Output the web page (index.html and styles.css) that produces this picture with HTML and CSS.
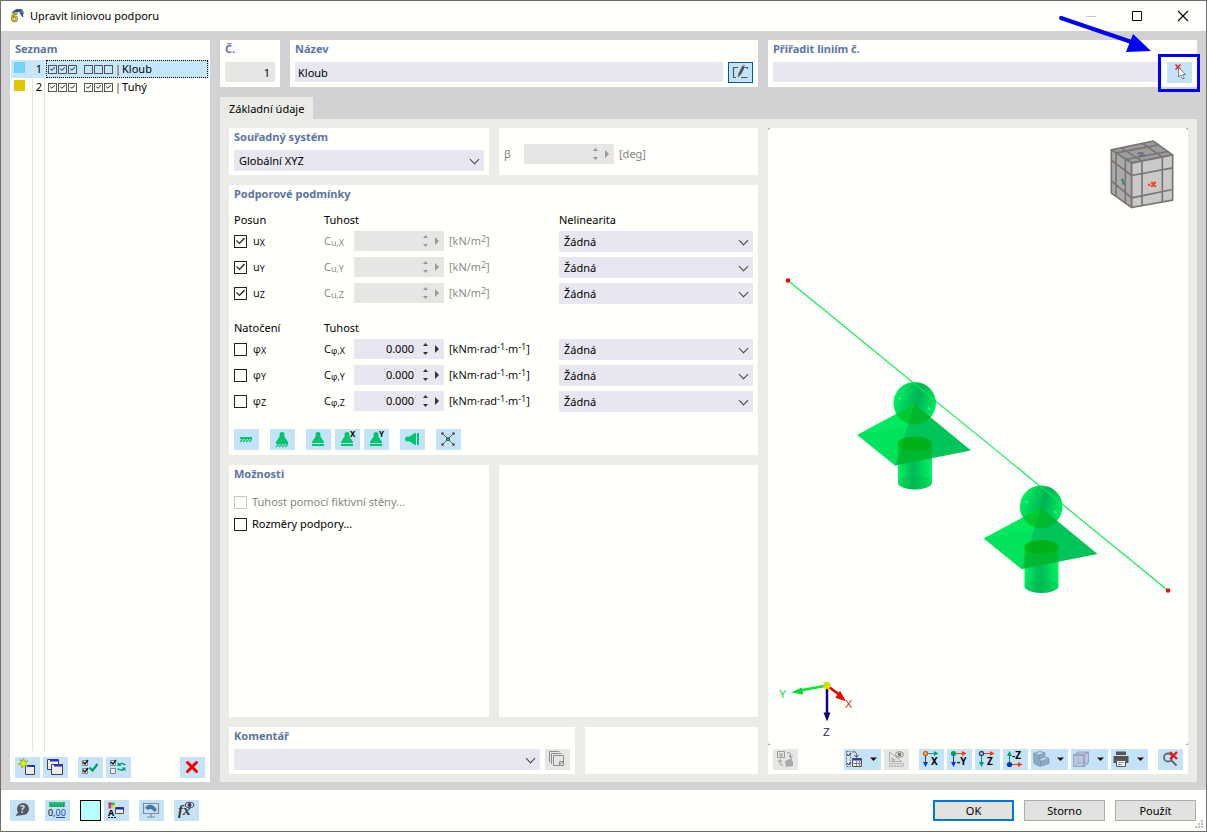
FILE: index.html
```html
<!DOCTYPE html>
<html lang="cs">
<head>
    <meta charset="UTF-8">
    <meta name="viewport" content="width=device-width, initial-scale=1">
    <title>Upravit liniovou podporu</title>
    <link rel="stylesheet" href="styles.css">
</head>
<body>
    <header class="titlebar">
        <svg class="app-icon" viewBox="0 0 16 16">
            <path d="M2 5 L7 1 L13 1 L15 5 L13 9 L10 4 Z" fill="#54719f"/>
            <path d="M4 4 L9 2 M8 4 L12 2 M12 5 L14 9" stroke="#26395e" fill="none"/>
            <text x="2" y="14" font-size="12" font-weight="bold" fill="#f0cc14" stroke="#5d5414" stroke-width=".5">6</text>
        </svg>
        <h1>Upravit liniovou podporu</h1>
        <div class="win-buttons">
            <button type="button" aria-label="Minimalizovat" disabled><svg viewBox="0 0 12 12"><path d="M1 6.500H11" stroke="#c9c9c6"/></svg></button>
            <button type="button" aria-label="Maximalizovat"><svg viewBox="0 0 12 12"><path d="M1.500 1.500H10.500V10.500H1.500Z" fill="none" stroke="#000"/></svg></button>
            <button type="button" aria-label="Zavřít"><svg viewBox="0 0 12 12"><path d="M1 1L11 11M11 1L1 11" stroke="#000" stroke-width="1.100"/></svg></button>
        </div>
    </header>

    <main class="workspace">
        <aside class="panel list-panel">
            <h2>Seznam</h2>
            <ul class="support-list">
                <li class="selected">
                    <span class="swatch blue"></span><span class="num">1</span>
                    <span class="entry">
                        <input class="mini" type="checkbox" aria-label="uX" checked><input class="mini" type="checkbox" aria-label="uY" checked><input class="mini" type="checkbox" aria-label="uZ" checked>
                        <input class="mini second" type="checkbox" aria-label="φX"><input class="mini" type="checkbox" aria-label="φY"><input class="mini" type="checkbox" aria-label="φZ">
                        <span class="bar">|</span>Kloub
                    </span>
                </li>
                <li>
                    <span class="swatch yellow"></span><span class="num">2</span>
                    <span class="entry">
                        <input class="mini" type="checkbox" aria-label="uX" checked><input class="mini" type="checkbox" aria-label="uY" checked><input class="mini" type="checkbox" aria-label="uZ" checked>
                        <input class="mini second" type="checkbox" aria-label="φX" checked><input class="mini" type="checkbox" aria-label="φY" checked><input class="mini" type="checkbox" aria-label="φZ" checked>
                        <span class="bar">|</span>Tuhý
                    </span>
                </li>
                <li class="rest"><span></span><span class="num"></span><span></span></li>
            </ul>
            <div class="toolbar list-tools">
                <button class="tool" type="button" aria-label="Nový">
                    <svg viewBox="0 0 25 21"><path d="M10.500 8.500H19.500V17.500H10.500Z" fill="#eee" stroke="#444"/><path d="M12 9H20" stroke="#2b2bd0" stroke-width="2"/><path d="M8.500 1L9.500 4.500L13 4L10.500 6.500L12.500 9.500L9 8.500L7 11L6.500 8L3.500 7L6.500 5.500L5 2.500L7.500 4Z" fill="#e3f500" stroke="#7d9a1c" stroke-width=".7"/></svg>
                </button>
                <button class="tool" type="button" aria-label="Kopírovat">
                    <svg viewBox="0 0 25 21"><path d="M4.500 2.500H15.500V12.500H4.500Z" fill="#eee" stroke="#444"/><path d="M7 3.500H15" stroke="#2b2bd0" stroke-width="2"/><path d="M8.500 7.500H19.500V17.500H8.500Z" fill="#eee" stroke="#444"/><path d="M11 8.500H19" stroke="#2b2bd0" stroke-width="2"/></svg>
                </button>
                <button class="tool gap" type="button" aria-label="Vybrat vše">
                    <svg viewBox="0 0 25 21"><path d="M4.500 3.500H9.500V8.500H4.500ZM4.500 11.500H9.500V16.500H4.500Z" fill="#e8eef2" stroke="#7b868e"/><path d="M5 5L7 7L10 3M5 13L7 15L10 11" fill="none" stroke="#111" stroke-width="1.300"/><path d="M11.500 10.500L14.500 13.500L19.500 7" fill="none" stroke="#00a068" stroke-width="2.200"/></svg>
                </button>
                <button class="tool" type="button" aria-label="Obrátit výběr">
                    <svg viewBox="0 0 25 21"><path d="M4.500 3.500H9.500V8.500H4.500ZM4.500 11.500H9.500V16.500H4.500Z" fill="#e8eef2" stroke="#7b868e"/><path d="M5 5L7 7L10 3" fill="none" stroke="#111" stroke-width="1.300"/><path d="M19.500 8C17 6 15 6 13 7.500M11.500 11.500C14 13.500 16 13.500 18 12" fill="none" stroke="#00a068" stroke-width="1.600"/><path d="M11.500 5V9H15.500ZM19.500 14.500V10.500H15.500Z" fill="#00a068"/></svg>
                </button>
                <button class="tool push" type="button" aria-label="Smazat">
                    <svg viewBox="0 0 25 21"><path d="M7.500 5.500L16.500 14.500M16.500 5.500L7.500 14.500" stroke="#f60000" stroke-width="3" stroke-linecap="round"/></svg>
                </button>
            </div>
        </aside>

        <div class="content">
            <div class="top-row">
                <section class="panel no-panel">
                    <h2><label for="no">Č.</label></h2>
                    <input id="no" class="field" type="text" value="1" readonly>
                </section>
                <section class="panel name-panel">
                    <h2><label for="name">Název</label></h2>
                    <div class="field-row">
                        <input id="name" class="field" type="text" value="Kloub">
                        <button class="tool outlined" type="button" aria-label="Upravit název">
                            <svg viewBox="0 0 25 21"><path d="M10 5.500H5.500V15.500H8M13 15.500H19.500M17 5.500H19.500V7" fill="none" stroke="#505960" stroke-width="1.200"/><path d="M10 15L11 11L14.500 4L16.500 5L13 12ZM15 3L17 4" fill="#505050" stroke="#505050" stroke-width=".6"/></svg>
                        </button>
                    </div>
                </section>
                <section class="panel assign-panel">
                    <h2><label for="assign">Přiřadit liniím č.</label></h2>
                    <div class="field-row">
                        <input id="assign" class="field" type="text">
                        <div class="pick">
                            <button class="tool" type="button" aria-label="Vybrat linie">
                                <svg viewBox="0 0 25 21"><path d="M8.500 2.500L13.500 7.500M13.500 2.500L8.500 7.500" stroke="#f01818" stroke-width="1.500"/><path d="M11.500 5.500V15L13.700 13L15.500 17L17.300 16.200L15.600 12.500H18.500Z" fill="#fff" stroke="#6c737a" stroke-width=".9"/></svg>
                            </button>
                            <svg class="pointer" viewBox="0 0 142 78"><path d="M3 4L72 27.500" stroke="#0000fe" stroke-width="4" stroke-linecap="round"/><path d="M75 20L93 37L68 38Z" fill="#0000fe"/><rect x="101.500" y="41.500" width="39" height="35" fill="none" stroke="#0000fe" stroke-width="3"/></svg>
                        </div>
                    </div>
                </section>
            </div>

            <nav class="tabs"><button class="tab" type="button">Základní údaje</button></nav>

            <div class="tab-page">
                <div class="settings">
                    <div class="split">
                        <section class="panel half">
                            <h2><label for="cs">Souřadný systém</label></h2>
                            <div class="select"><select id="cs"><option>Globální XYZ</option></select></div>
                        </section>
                        <section class="panel fill">
                            <div class="beta-row">
                                <label for="beta">β</label>
                                <div class="spin disabled"><input id="beta" type="text" disabled><svg viewBox="0 0 22 20"><path d="M1 7L3.500 4L6 7ZM1 13L3.500 16L6 13ZM13 6L17 10L13 14Z"/></svg></div>
                                <span>[deg]</span>
                            </div>
                        </section>
                    </div>

                    <section class="panel conditions">
                        <h2>Podporové podmínky</h2>
                        <div class="cond-grid">
                            <span class="head">Posun</span><span class="head wide">Tuhost</span><span class="head">Nelinearita</span>

                            <label class="check"><input type="checkbox" checked><span>u<small>X</small></span></label>
                            <label class="coef off" for="cux">C<small>u,X</small></label>
                            <div class="spin disabled"><input id="cux" type="text" disabled><svg viewBox="0 0 22 20"><path d="M1 7L3.500 4L6 7ZM1 13L3.500 16L6 13ZM13 6L17 10L13 14Z"/></svg></div>
                            <span class="unit off">[kN/m<sup>2</sup>]</span>
                            <div class="select"><select aria-label="Nelinearita uX"><option>Žádná</option></select></div>

                            <label class="check"><input type="checkbox" checked><span>u<small>Y</small></span></label>
                            <label class="coef off" for="cuy">C<small>u,Y</small></label>
                            <div class="spin disabled"><input id="cuy" type="text" disabled><svg viewBox="0 0 22 20"><path d="M1 7L3.500 4L6 7ZM1 13L3.500 16L6 13ZM13 6L17 10L13 14Z"/></svg></div>
                            <span class="unit off">[kN/m<sup>2</sup>]</span>
                            <div class="select"><select aria-label="Nelinearita uY"><option>Žádná</option></select></div>

                            <label class="check"><input type="checkbox" checked><span>u<small>Z</small></span></label>
                            <label class="coef off" for="cuz">C<small>u,Z</small></label>
                            <div class="spin disabled"><input id="cuz" type="text" disabled><svg viewBox="0 0 22 20"><path d="M1 7L3.500 4L6 7ZM1 13L3.500 16L6 13ZM13 6L17 10L13 14Z"/></svg></div>
                            <span class="unit off">[kN/m<sup>2</sup>]</span>
                            <div class="select"><select aria-label="Nelinearita uZ"><option>Žádná</option></select></div>
                        </div>
                        <div class="cond-grid">
                            <span class="head">Natočení</span><span class="head wide">Tuhost</span><span class="head"></span>

                            <label class="check"><input type="checkbox"><span>φ<small>X</small></span></label>
                            <label class="coef" for="cfx">C<small>φ,X</small></label>
                            <div class="spin"><input id="cfx" type="text" value="0.000"><svg viewBox="0 0 22 20"><path d="M1 7L3.500 4L6 7ZM1 13L3.500 16L6 13ZM13 6L17 10L13 14Z"/></svg></div>
                            <span class="unit">[kNm·rad<sup>-1</sup>·m<sup>-1</sup>]</span>
                            <div class="select"><select aria-label="Nelinearita φX"><option>Žádná</option></select></div>

                            <label class="check"><input type="checkbox"><span>φ<small>Y</small></span></label>
                            <label class="coef" for="cfy">C<small>φ,Y</small></label>
                            <div class="spin"><input id="cfy" type="text" value="0.000"><svg viewBox="0 0 22 20"><path d="M1 7L3.500 4L6 7ZM1 13L3.500 16L6 13ZM13 6L17 10L13 14Z"/></svg></div>
                            <span class="unit">[kNm·rad<sup>-1</sup>·m<sup>-1</sup>]</span>
                            <div class="select"><select aria-label="Nelinearita φY"><option>Žádná</option></select></div>

                            <label class="check"><input type="checkbox"><span>φ<small>Z</small></span></label>
                            <label class="coef" for="cfz">C<small>φ,Z</small></label>
                            <div class="spin"><input id="cfz" type="text" value="0.000"><svg viewBox="0 0 22 20"><path d="M1 7L3.500 4L6 7ZM1 13L3.500 16L6 13ZM13 6L17 10L13 14Z"/></svg></div>
                            <span class="unit">[kNm·rad<sup>-1</sup>·m<sup>-1</sup>]</span>
                            <div class="select"><select aria-label="Nelinearita φZ"><option>Žádná</option></select></div>
                        </div>
                        <div class="toolbar presets">
                            <button class="tool" type="button" aria-label="Vetknutí"><svg viewBox="0 0 25 21"><path d="M6 8H18V10H6Z" fill="#00c56d"/><path d="M6 13L9 10M9 13L12 10M12 13L15 10M15 13L18 10" stroke="#00c56d" stroke-width="1.300"/></svg></button>
                            <button class="tool wide-gap" type="button" aria-label="Kloub"><svg viewBox="0 0 25 21"><circle cx="12" cy="5.500" r="2.500" fill="#00c56d"/><path d="M10.500 6H13.500L18 13V15H6V13Z" fill="#00c56d"/><path d="M6 18L9 15M9 18L12 15M12 18L15 15M15 18L18 15" stroke="#00c56d" stroke-width="1.300"/></svg></button>
                            <button class="tool wide-gap" type="button" aria-label="Posuvná"><svg viewBox="0 0 25 21"><circle cx="12" cy="5.500" r="2.500" fill="#00c56d"/><path d="M10.500 6H13.500L18 13V14H6V13ZM6 15H18V17H6Z" fill="#00c56d"/></svg></button>
                            <button class="tool" type="button" aria-label="Posuvná X"><svg viewBox="0 0 25 21"><circle cx="12" cy="5.500" r="2.500" fill="#00c56d"/><path d="M10.500 6H13.500L18 13V14H6V13ZM6 15H18V17H6Z" fill="#00c56d"/><text x="15" y="8" font-size="8" font-weight="bold">X</text></svg></button>
                            <button class="tool" type="button" aria-label="Posuvná Y"><svg viewBox="0 0 25 21"><circle cx="12" cy="5.500" r="2.500" fill="#00c56d"/><path d="M10.500 6H13.500L18 13V14H6V13ZM6 15H18V17H6Z" fill="#00c56d"/><text x="15" y="8" font-size="8" font-weight="bold">Y</text></svg></button>
                            <button class="tool wide-gap" type="button" aria-label="Boční"><svg viewBox="0 0 25 21"><circle cx="7.500" cy="10" r="2.500" fill="#00c56d"/><path d="M8 8.500V11.500L15 16H16V4H15ZM17 4H19V16H17Z" fill="#00c56d"/></svg></button>
                            <button class="tool wide-gap" type="button" aria-label="Volná"><svg viewBox="0 0 25 21"><path d="M6.500 4.500L17.500 15.500M17.500 4.500L6.500 15.500" stroke="#555" stroke-width="1"/><g fill="#666"><circle cx="6.500" cy="4.500" r="1.500"/><circle cx="17.500" cy="4.500" r="1.500"/><circle cx="6.500" cy="15.500" r="1.500"/><circle cx="17.500" cy="15.500" r="1.500"/></g><path d="M10.500 8.500H13.500V11.500H10.500Z" fill="#19b34b" stroke="#49604e"/></svg></button>
                        </div>
                    </section>

                    <div class="split grow">
                        <section class="panel half options">
                            <h2>Možnosti</h2>
                            <label class="check off"><input type="checkbox" disabled><span>Tuhost pomocí fiktivní stěny...</span></label>
                            <label class="check"><input type="checkbox"><span>Rozměry podpory...</span></label>
                        </section>
                        <section class="panel fill"></section>
                    </div>

                    <div class="split">
                        <section class="panel comment">
                            <h2><label for="comment">Komentář</label></h2>
                            <div class="field-row">
                                <div class="select"><select id="comment"><option></option></select></div>
                                <button class="tool" type="button" aria-label="Uložené komentáře" disabled><svg viewBox="0 0 25 21"><path d="M4.500 13V2.500H14.500M6.500 15V4.500H16.500M8.500 6.500H18.500V16.500H8.500ZM14.500 16V12.500H18" fill="none" stroke="#8d8d8d"/><path d="M15 15L18 13" stroke="#8d8d8d"/></svg></button>
                            </div>
                        </section>
                        <section class="panel fill"></section>
                    </div>
                </div>

                <section class="panel viewer">
                    <!-- model preview -->
                    <svg class="scene" viewBox="768 128 420 616">
                        <defs>
                            <linearGradient id="ball" x1="0" y1="0.3" x2="1" y2="0.6"><stop offset="0" stop-color="#00f562"/><stop offset=".55" stop-color="#00b453"/><stop offset="1" stop-color="#00ec61"/></linearGradient>
                            <linearGradient id="tube"><stop offset="0" stop-color="#00f562"/><stop offset=".45" stop-color="#00b858"/><stop offset=".6" stop-color="#00ca58"/><stop offset="1" stop-color="#00f562"/></linearGradient>
                            <clipPath id="plate"><path d="M914.700 403.700L857.300 434.500L895 465L971 450Z"/></clipPath>
                            <g id="support">
                                <path d="M898 443V482A17 7 0 0 0 932 482V443Z" fill="url(#tube)"/>
                                <ellipse cx="915" cy="482" rx="17" ry="7" fill="#00b44c" opacity=".3"/>
                                <circle cx="914.700" cy="402.700" r="21.300" fill="url(#ball)"/>
                                <path d="M914.700 403.700L857.300 434.500L895 465L900 464Z" fill="#00e35b"/>
                                <path d="M914.700 403.700L857.300 434.500L909 425Z" fill="#00ea5d"/>
                                <path d="M914.700 403.700L971 450L895 465Z" fill="#00c65a"/>
                                <g clip-path="url(#plate)" fill="#00a800">
                                    <circle cx="914.700" cy="402.700" r="21.300" opacity=".5"/>
                                    <path d="M898 443A17 7 0 0 1 932 443V490H898Z" opacity=".45"/>
                                    <ellipse cx="915" cy="443" rx="17" ry="7" opacity=".45"/>
                                </g>
                                <circle cx="900" cy="398" r="1.200" fill="#19ff8a"/><circle cx="929" cy="408" r="1.500" fill="#19ff72"/>
                            </g>
                        </defs>
                        <use href="#support"/>
                        <use href="#support" transform="translate(126.500 103.500)"/>
                        <path d="M788 280L1168 590" stroke="#00ee50" stroke-width="1.100"/>
                        <circle cx="788" cy="280" r="2.200" fill="#f60000"/><circle cx="1168" cy="590" r="2.200" fill="#f60000"/>
                        <path d="M768 130V128H770M1186 128H1188V130M768 742V744H770M1186 744H1188V742" fill="none" stroke="#aaa"/>

                        <!-- view cube -->
                        <g transform="translate(1090 120) scale(.3333)" stroke="#7b7474" stroke-width="5" stroke-linejoin="round">
                            <path d="M64 88L190 62L248 103L125 128Z" fill="#9d9d9d"/>
                            <path d="M64 88L125 128V261L64 218Z" fill="#aaa"/>
                            <path d="M125 128L248 103V239L125 261Z" fill="#c9c9c8"/>
                            <path d="M94 82L156 122V256M158 69L217 110V244M78 97L206 73M106 117L235 93M78 97V228M106 117V248M64 119L125 165L248 142M64 181L125 232L248 207" fill="none"/>
                            <path d="M142 99L160 97M147 107L165 103" stroke="#656586" stroke-width="5"/>
                            <path d="M95 175L100 184L101 193" fill="none" stroke="#42896a" stroke-width="7"/>
                            <path d="M174 193H181M184 184L197 199M197 184L184 199" stroke="#fa3a20" stroke-width="6"/>
                        </g>

                        <!-- axes -->
                        <path d="M827 685L800 690" stroke="#00e83a" stroke-width="2.500"/><path d="M791 692L802 687L803 694Z" fill="#00d83b"/>
                        <path d="M827 685L839 694" stroke="#e80000" stroke-width="2.500"/><path d="M845 700L836 697L840 691Z" fill="#f60000" stroke="#f60000"/>
                        <path d="M827 685V713" stroke="#1b0080" stroke-width="2.500"/><path d="M823.500 712H830.500L827 721Z" fill="#1b0070"/>
                        <circle cx="827" cy="685" r="3.700" fill="#d4db00"/>
                        <g class="axis-names"><text x="779" y="697" fill="#00d84a">Y</text><text x="845" y="707" fill="#f02020">X</text><text x="823" y="735" fill="#2c1e80">Z</text></g>
                    </svg>
                    <div class="toolbar view-tools">
                        <button class="tool" type="button" aria-label="Obnovit" disabled><svg viewBox="0 0 25 21"><path d="M4.500 2.500H11.500V8.500H4.500ZM7 4V7H9V4" fill="none" stroke="#999"/><path d="M14 4C17 3 18 4 17.500 8M16 6L17.500 9L19.500 6.500M7 11V14C7 16 8 16 10 16M5 13L7 10.500L9 13" fill="none" stroke="#999"/><path d="M12 12L19 9V12H20V17L13 18Z" fill="#aaa"/></svg></button>
                        <button class="tool drop push" type="button" aria-label="Seznam zobrazení"><svg viewBox="0 0 37 21"><path d="M2.500 2.500H6.500V17.500H2.500Z" fill="#dde7ef" stroke="#6b7780" stroke-dasharray="2 1"/><path d="M3 5L4.500 7L6.500 4M3 14L4.500 16L6.500 13" fill="none" stroke="#222"/><path d="M8 3C12 2 13 4 12.500 8M10.500 6L12.500 8.500L14.500 6" fill="none" stroke="#555"/><path d="M8.500 9.500H17.500V17.500H8.500Z" fill="#eee" stroke="#555"/><path d="M9 10.500H17.500" stroke="#2737ca" stroke-width="2"/><path d="M9 14.500H17M12.500 12V17M15.500 12V17" stroke="#888"/><path d="M26 8.500H33L29.500 12Z" fill="#111"/></svg></button>
                        <button class="tool" type="button" aria-label="Kóty" disabled><svg viewBox="0 0 25 21"><path d="M5.500 3V12.500H17.500ZM8 9V11H11Z" fill="none" stroke="#aaa"/><path d="M5.500 14.500H19.500V17.500H5.500ZM8 15V17M11 15V17M14 15V17M17 15V17" fill="none" stroke="#bbb"/><ellipse cx="15.500" cy="5.500" rx="4" ry="2.800" fill="none" stroke="#888"/><circle cx="15.500" cy="5.500" r="1.800" fill="#777"/></svg></button>
                        <button class="tool gap" type="button" aria-label="Pohled X"><svg viewBox="0 0 25 21"><path d="M7 4.500H16" stroke="#00a26a"/><path d="M15 2L19.500 4.500L15 7Z" fill="#00a26a"/><path d="M6.500 5V14" stroke="#003bd8"/><path d="M4 13H9L6.500 18Z" fill="#003bd8"/><circle cx="6.500" cy="4.500" r="2" fill="#f8d434" stroke="#f05114" stroke-width="1.300"/><text x="12" y="16" font-size="10" font-weight="bold">X</text></svg></button>
                        <button class="tool" type="button" aria-label="Pohled -Y"><svg viewBox="0 0 25 21"><path d="M7 4.500H16" stroke="#ff3900"/><path d="M15 2L19.500 4.500L15 7Z" fill="#ff3900"/><path d="M6.500 5V14" stroke="#003bd8"/><path d="M4 13H9L6.500 18Z" fill="#003bd8"/><circle cx="6.500" cy="4.500" r="2.600" fill="#009b68"/><text x="10" y="16" font-size="10" font-weight="bold">-Y</text></svg></button>
                        <button class="tool" type="button" aria-label="Pohled Z"><svg viewBox="0 0 25 21"><path d="M7 4.500H16" stroke="#ff3900"/><path d="M15 2L19.500 4.500L15 7Z" fill="#ff3900"/><path d="M6.500 5V14" stroke="#00a26a"/><path d="M4 13H9L6.500 18Z" fill="#00a26a"/><circle cx="6.500" cy="4.500" r="2" fill="#f8e434" stroke="#1439c8" stroke-width="1.300"/><text x="12" y="16" font-size="10" font-weight="bold">Z</text></svg></button>
                        <button class="tool" type="button" aria-label="Pohled -Z"><svg viewBox="0 0 25 21"><path d="M7 15.500H16" stroke="#ff3900"/><path d="M15 13L19.500 15.500L15 18Z" fill="#ff3900"/><path d="M6.500 15V6" stroke="#00a26a"/><path d="M4 7H9L6.500 2Z" fill="#00a26a"/><circle cx="6.500" cy="15.500" r="2.600" fill="#0032c0"/><text x="9" y="10" font-size="10" font-weight="bold">-Z</text></svg></button>
                        <button class="tool drop" type="button" aria-label="Zobrazení ploch"><svg viewBox="0 0 37 21"><path d="M2.500 4.500L9 2.500L14 4V8L18 9.500V14.500L9 17.500L3 14.500Z" fill="#8ba8c6" stroke="#7790aa" stroke-width=".7"/><path d="M2.500 4.500L9 2.500L14 4L8 6ZM8 11L13 8L18 9.500L10 12Z" fill="#c3d7e9" stroke="#7c95af" stroke-width=".7"/><path d="M8 6V11L9.500 12V17" fill="none" stroke="#7c95af"/><path d="M26 8.500H33L29.500 12Z" fill="#111"/></svg></button>
                        <button class="tool drop" type="button" aria-label="Drátěný model"><svg viewBox="0 0 37 21"><path d="M2.500 6L7 3H17.500L13 6ZM2.500 6H13V17.500H2.500ZM13 6L17.500 3V14L13 17.500Z" fill="#bbc6df" stroke="#8e96b2" stroke-width=".8"/><path d="M7 3V14H17M7 14L3 17" fill="none" stroke="#a2abc4" stroke-width=".7"/><path d="M26 8.500H33L29.500 12Z" fill="#111"/></svg></button>
                        <button class="tool drop" type="button" aria-label="Tisk"><svg viewBox="0 0 37 21"><path d="M5 2.500H15V6H5ZM2.500 7H17.500V14H15V11H5V14H2.500Z" fill="#555"/><path d="M5.500 11.500H14.500V17.500H5.500Z" fill="#fff" stroke="#555"/><path d="M7 13.500H13M7 15.500H11" stroke="#888"/><path d="M26 8.500H33L29.500 12Z" fill="#111"/></svg></button>
                        <button class="tool gap" type="button" aria-label="Zrušit lupu"><svg viewBox="0 0 25 21"><circle cx="10" cy="8.500" r="4" fill="none" stroke="#65686a" stroke-width="1.800"/><path d="M13 11L18.500 16.500" stroke="#65686a" stroke-width="2"/><path d="M12 3L19 10M19 3L12 10" stroke="#f01212" stroke-width="2.400"/></svg></button>
                    </div>
                </section>
            </div>
        </div>
    </main>

    <footer class="bottom">
        <button class="tool" type="button" aria-label="Nápověda"><svg viewBox="0 0 25 21"><circle cx="13" cy="9" r="6" fill="#53595e"/><path d="M9 11L5.500 16L13 15Z" fill="#53595e"/><text x="10" y="13" font-size="10" font-weight="bold" fill="#c5e3f8">?</text></svg></button>
        <button class="tool wide" type="button" aria-label="Jednotky"><svg viewBox="0 0 25 21"><path d="M4 2H20V7H4Z" fill="#26be70"/><path d="M6.500 4V7M9.500 4V7M12.500 4V7M15.500 4V7M18.500 4V7" stroke="#0c8b4e" stroke-width=".8"/><text x="3" y="16" font-size="9">0,<tspan fill="#1948c8">00</tspan></text><path d="M11 17.500H20" stroke="#1948c8"/></svg></button>
        <button class="color-box wide" type="button" aria-label="Barva"></button>
        <button class="tool" type="button" aria-label="Písmo a barvy"><svg viewBox="0 0 25 21"><path d="M4.500 2.500H7.500V5.500H4.500Z" fill="#f01010"/><path d="M7.500 2.500H10.500V5.500H7.500Z" fill="#15cc22"/><path d="M4.500 5.500H7.500V8.500H4.500Z" fill="#b42ae0"/><path d="M7.500 5.500H10.500V8.500H7.500Z" fill="#eee11b"/><text x="4" y="16" font-size="9" font-weight="bold">A</text><path d="M4 17.500H12" stroke="#111" stroke-dasharray="2 1"/><path d="M11.500 7.500H19.500V13.500H11.500Z" fill="#eee" stroke="#555"/><path d="M12 8.500H20" stroke="#2826a6" stroke-width="2"/></svg></button>
        <button class="tool wide" type="button" aria-label="Zobrazení"><svg viewBox="0 0 25 21"><path d="M4.500 3.500H19.500V13.500H4.500ZM12 14V17M8 17H16" fill="none" stroke="#7e8a94" stroke-width="1.200"/><path d="M6 8C9 3 15 4 18 10L15 12C14 9 11 8 9 10Z" fill="#46769f"/></svg></button>
        <button class="tool wide" type="button" aria-label="Funkce"><svg viewBox="0 0 25 21"><text class="fx" x="4" y="15" font-size="15">fx</text><ellipse cx="15.500" cy="5" rx="4.300" ry="2.700" fill="#ddd" stroke="#393666"/><circle cx="15.500" cy="5" r="2" fill="#393666"/></svg></button>
        <div class="actions">
            <button class="action primary" type="submit">OK</button>
            <button class="action" type="button">Storno</button>
            <button class="action" type="button">Použít</button>
        </div>
        <svg class="grip" viewBox="0 0 9 9"><path d="M6 0H8V2H6ZM3 3H5V5H3ZM6 3H8V5H6ZM0 6H2V8H0ZM3 6H5V8H3ZM6 6H8V8H6Z" fill="#bbb"/></svg>
    </footer>
</body>
</html>
```
FILE: styles.css
```css
:root {
    --white: #fffffb;
    --frame: #d2d2d4;
    --page: #ebece8;
    --field: #e8e7f1;
    --off: #e6e6e5;
    --tool: #c5e3f8;
    --heading: #5b74a4;
    --muted: #858585;
}
* {
    box-sizing: border-box;
}
body {
    margin: 0;
    min-height: 100vh;
    display: flex;
    flex-direction: column;
    border: 1px solid #6e6e6e;
    background: var(--white);
    color: #000;
    font-family: "Noto Sans", "Open Sans", sans-serif;
    font-size: 11px;
    line-height: 18px;
}
button, input, select {
    font: inherit;
    color: inherit;
    margin: 0;
    border: 0;
    border-radius: 0;
    padding: 0;
}
button {
    cursor: pointer;
}
svg {
    display: block;
}
h1, h2 {
    margin: 0;
    font-size: inherit;
}

/* title bar */
.titlebar {
    display: flex;
    align-items: center;
    height: 30px;
    padding-left: 8px;
}
.titlebar h1 {
    font-weight: 400;
}
.app-icon {
    width: 16px;
    height: 16px;
    margin-right: 5px;
    overflow: visible;
}
.win-buttons {
    display: flex;
    margin-left: auto;
}
.win-buttons button {
    width: 46px;
    height: 30px;
    display: grid;
    place-items: center;
    background: none;
}
.win-buttons svg {
    width: 12px;
    height: 12px;
}

/* frame */
.workspace {
    flex: 1;
    display: flex;
    gap: 10px;
    padding: 9px 9px 8px;
    background: var(--frame);
}
.panel {
    background: var(--white);
    padding: 0 5px 4px;
}
.panel h2 {
    height: 22px;
    line-height: 18px;
    color: var(--heading);
    font-weight: 700;
}
.content {
    flex: 1;
    min-width: 0;
    display: flex;
    flex-direction: column;
}

/* list */
.list-panel {
    width: 200px;
    display: flex;
    flex-direction: column;
    padding: 0 1px 4px;
}
.list-panel h2 {
    height: 20px;
    padding-left: 4px;
}
.support-list {
    flex: 1;
    display: flex;
    flex-direction: column;
    list-style: none;
    margin: 0 0 6px;
    padding: 0;
}
.support-list li {
    display: grid;
    grid-template-columns: 21px 13px 1fr;
    height: 18px;
}
.support-list .rest {
    flex: 1;
}
.num {
    border-left: 1px solid #e4e5e2;
    border-right: 1px solid #e4e5e2;
    text-align: right;
    padding-right: 2px;
}
.selected {
    background: #c5e6ff;
}
.entry {
    display: flex;
    align-items: center;
    gap: 1px;
    margin: 0 1px;
    padding-left: 2px;
}
.selected .entry {
    outline: 1px dotted #000;
    outline-offset: -1px;
}
.swatch {
    width: 11px;
    height: 11px;
    margin: 2px 3px;
}
.blue {
    background: #75d2fc;
}
.yellow {
    background: #e4c400;
}
.bar {
    color: #8c2020;
    margin-left: 1px;
}

/* fields */
.field {
    width: 100%;
    min-width: 0;
    height: 20px;
    padding: 0 3px;
    background: var(--field);
    display: block;
}
.field-row {
    display: flex;
    gap: 5px;
}
.no-panel .field {
    background: var(--off);
    text-align: right;
    padding-right: 5px;
}
.select {
    position: relative;
    flex: 1;
    min-width: 0;
    height: 21px;
}
.select select {
    appearance: none;
    display: block;
    width: 100%;
    height: 21px;
    padding: 0 5px;
    background: var(--field);
}
.select::after {
    content: "";
    position: absolute;
    right: 6px;
    top: 6px;
    width: 6px;
    height: 6px;
    border: solid #444;
    border-width: 0 1px 1px 0;
    transform: rotate(45deg);
    pointer-events: none;
}
.spin {
    display: flex;
    width: 90px;
    height: 20px;
    background: var(--field);
    fill: #333;
}
.spin input {
    flex: 1;
    min-width: 0;
    background: none;
    text-align: right;
    padding-right: 8px;
}
.spin svg {
    width: 22px;
    height: 20px;
}
.spin.disabled {
    background: var(--off);
    fill: #999;
}
input[type="checkbox"] {
    appearance: none;
    position: relative;
    flex: none;
    width: 13px;
    height: 13px;
    border: 1px solid #222;
}
input[type="checkbox"]:checked::after {
    content: "";
    position: absolute;
    inset: 1px;
    background: #222;
    clip-path: polygon(0 48%, 10% 38%, 38% 66%, 90% 12%, 100% 24%, 38% 86%);
}
input[type="checkbox"]:disabled {
    border-color: #c8c8c8;
}
input.mini[type="checkbox"] {
    width: 9px;
    height: 9px;
    border-color: #555;
}
.mini.second[type="checkbox"] {
    margin-left: 6px;
}
.check {
    display: flex;
    align-items: center;
    gap: 6px;
    height: 20px;
}
.off {
    color: var(--muted);
}
small {
    font-size: 9px;
    position: relative;
    top: 1px;
}
sup {
    font-size: 9px;
    line-height: 0;
    vertical-align: 3px;
}

/* tool buttons */
.toolbar {
    display: flex;
    gap: 3px;
}
.tool {
    flex: none;
    width: 25px;
    height: 21px;
    background: var(--tool);
}
.tool svg {
    width: 100%;
    height: 100%;
}
.tool:disabled {
    background: var(--off);
}
.tool.drop {
    width: 37px;
}
.tool.gap {
    margin-left: 7px;
}
.tool.push {
    margin-left: auto;
}
.tool.outlined {
    outline: 1px solid #0057a8;
    outline-offset: -1px;
}
.list-tools {
    padding: 0 4px;
}

/* top row */
.top-row {
    display: flex;
    gap: 10px;
}
.no-panel {
    width: 60px;
}
.name-panel {
    width: 468px;
}
.assign-panel {
    flex: 1;
    min-width: 0;
}
.pick {
    position: relative;
    display: flex;
}
.pointer {
    position: absolute;
    width: 142px;
    height: 78px;
    right: -8px;
    bottom: -9px;
    overflow: visible;
    pointer-events: none;
}

/* tabs */
.tabs {
    margin-top: 10px;
    display: flex;
}
.tab {
    height: 22px;
    padding: 2px 9px 0;
    background: var(--page);
}
.tab-page {
    flex: 1;
    display: flex;
    gap: 10px;
    padding: 9px 9px 8px;
    background: var(--page);
}
.settings {
    width: 529px;
    display: flex;
    flex-direction: column;
    gap: 10px;
}
.split {
    display: flex;
    gap: 10px;
}
.split.grow {
    flex: 1;
}
.half {
    width: 260px;
}
.fill {
    flex: 1;
    min-width: 0;
}
.beta-row {
    display: flex;
    align-items: center;
    padding-top: 16px;
    color: var(--muted);
}
.beta-row label {
    width: 20px;
}
.beta-row span {
    margin-left: 5px;
}

/* support conditions */
.conditions {
    padding-bottom: 5px;
}
.conditions h2 {
    height: 26px;
}
.cond-grid {
    display: grid;
    grid-template-columns: 90px 30px 90px 115px 1fr;
    grid-template-rows: 20px;
    grid-auto-rows: 26px;
    margin-bottom: 10px;
}
.cond-grid .wide {
    grid-column: span 3;
}
.cond-grid + .cond-grid {
    margin-bottom: 12px;
}
.coef, .unit, .cond-grid .check {
    font-family: "Open Sans", sans-serif;
}
.coef, .unit {
    line-height: 20px;
    white-space: nowrap;
}
.unit {
    padding-left: 5px;
}
.presets {
    gap: 4px;
}
.tool.wide-gap {
    margin-left: 7px;
}
.options h2 {
    height: 26px;
}
.options .check {
    height: 22px;
    gap: 5px;
}
.comment {
    width: 346px;
}

/* viewer */
.viewer {
    flex: 1;
    min-width: 0;
    display: flex;
    flex-direction: column;
    padding: 0 0 4px;
}
.scene {
    flex: 1 1 0;
    width: 100%;
    height: 0;
    min-height: 400px;
}
.axis-names {
    font-family: "Liberation Sans", sans-serif;
    font-size: 11px;
}
.view-tools {
    margin-top: 4px;
    padding: 0 5px;
}

/* footer */
.bottom {
    position: relative;
    display: flex;
    gap: 3px;
    padding: 10px 10px 10px 9px;
}
.bottom .wide {
    margin-left: 7px;
}
.color-box {
    width: 21px;
    height: 21px;
    background: #b5ffff;
    border: 1px solid #000;
}
.fx {
    font-family: "Liberation Serif", serif;
    font-style: italic;
    font-weight: 700;
    fill: #383838;
}
.actions {
    display: flex;
    gap: 10px;
    margin-left: auto;
}
.action {
    width: 81px;
    height: 21px;
    background: #e1e1df;
    border: 1px solid #adadad;
}
.action.primary {
    border: 2px solid #0078d7;
}
.grip {
    position: absolute;
    right: 2px;
    bottom: 2px;
    width: 9px;
    height: 9px;
}
```
